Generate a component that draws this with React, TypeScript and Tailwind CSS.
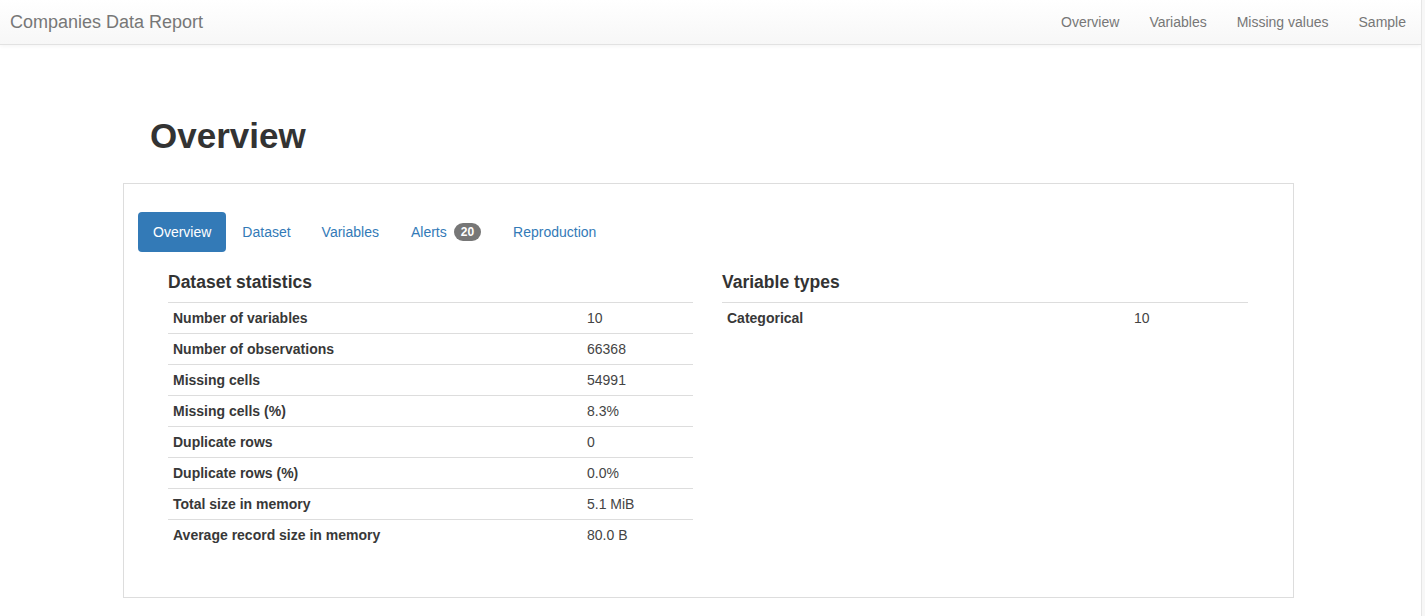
import { Fragment } from 'react'

const datasetStats = [
  ['Number of variables', '10'],
  ['Number of observations', '66368'],
  ['Missing cells', '54991'],
  ['Missing cells (%)', '8.3%'],
  ['Duplicate rows', '0'],
  ['Duplicate rows (%)', '0.0%'],
  ['Total size in memory', '5.1 MiB'],
  ['Average record size in memory', '80.0 B'],
]

const variableTypes = [['Categorical', '10']]

const navLinks = ['Overview', 'Variables', 'Missing values', 'Sample']

function StatsTable({ title, rows, labelWidth }: { title: string; rows: string[][]; labelWidth: string }) {
  return (
    <div>
      <p className="text-[17.5px] font-bold leading-[20px] text-[#333] mb-[10px]">{title}</p>
      <div className={`grid ${labelWidth} text-[14px] leading-[20px] text-[#444]`}>
        {rows.map(([label, value]) => (
          <Fragment key={label}>
            <div className="border-t border-[#ddd] px-[5px] py-[5px] font-bold text-[#383838]">{label}</div>
            <div className="border-t border-[#ddd] px-[5px] py-[5px]">{value}</div>
          </Fragment>
        ))}
      </div>
    </div>
  )
}

export default function App() {
  return (
    <div className="flex min-h-screen bg-white font-['Liberation_Sans',Arial,sans-serif]">
      <div className="flex-1">
        <nav className="h-[45px] flex items-center justify-between border-b border-[#e2e2e2] bg-gradient-to-b from-white to-[#f7f7f7] shadow-[0_1px_4px_rgba(0,0,0,0.05)]">
          <span className="pl-[10px] text-[18px] text-[#777]">Companies Data Report</span>
          <ul className="flex text-[14px] text-[#777]">
            {navLinks.map((link) => (
              <li key={link} className="px-[15px] leading-[20px]">
                {link}
              </li>
            ))}
          </ul>
        </nav>

        <h1 className="ml-[150px] mt-[71px] text-[35px] font-bold leading-[40px] text-[#333]">Overview</h1>

        <section className="ml-[123px] mt-[27px] w-[1171px] border border-[#ddd] px-[14px] pt-[28px] pb-[47px]">
          <ul className="flex gap-[1px] text-[14px] leading-[20px]">
            <li className="rounded-[4px] bg-[#337ab7] px-[15px] py-[10px] text-white">Overview</li>
            <li className="px-[15px] py-[10px] text-[#337ab7]">Dataset</li>
            <li className="px-[15px] py-[10px] text-[#337ab7]">Variables</li>
            <li className="ml-[1px] flex items-center px-[15px] py-[10px] text-[#337ab7]">
              Alerts
              <span className="ml-[7px] rounded-[10px] bg-[#777] px-[7px] py-[3px] text-[12px] font-bold leading-[12px] text-white">
                20
              </span>
            </li>
            <li className="ml-[1px] px-[15px] py-[10px] text-[#337ab7]">Reproduction</li>
          </ul>

          <div className="mt-[20px] grid grid-cols-[525px_526px] gap-[29px] px-[30px]">
            <StatsTable title="Dataset statistics" rows={datasetStats} labelWidth="grid-cols-[414px_1fr]" />
            <StatsTable title="Variable types" rows={variableTypes} labelWidth="grid-cols-[407px_1fr]" />
          </div>
        </section>
      </div>
      <div className="w-[4px] border-l border-[#e6e6e6] bg-[#f7f7f7]" />
    </div>
  )
}
